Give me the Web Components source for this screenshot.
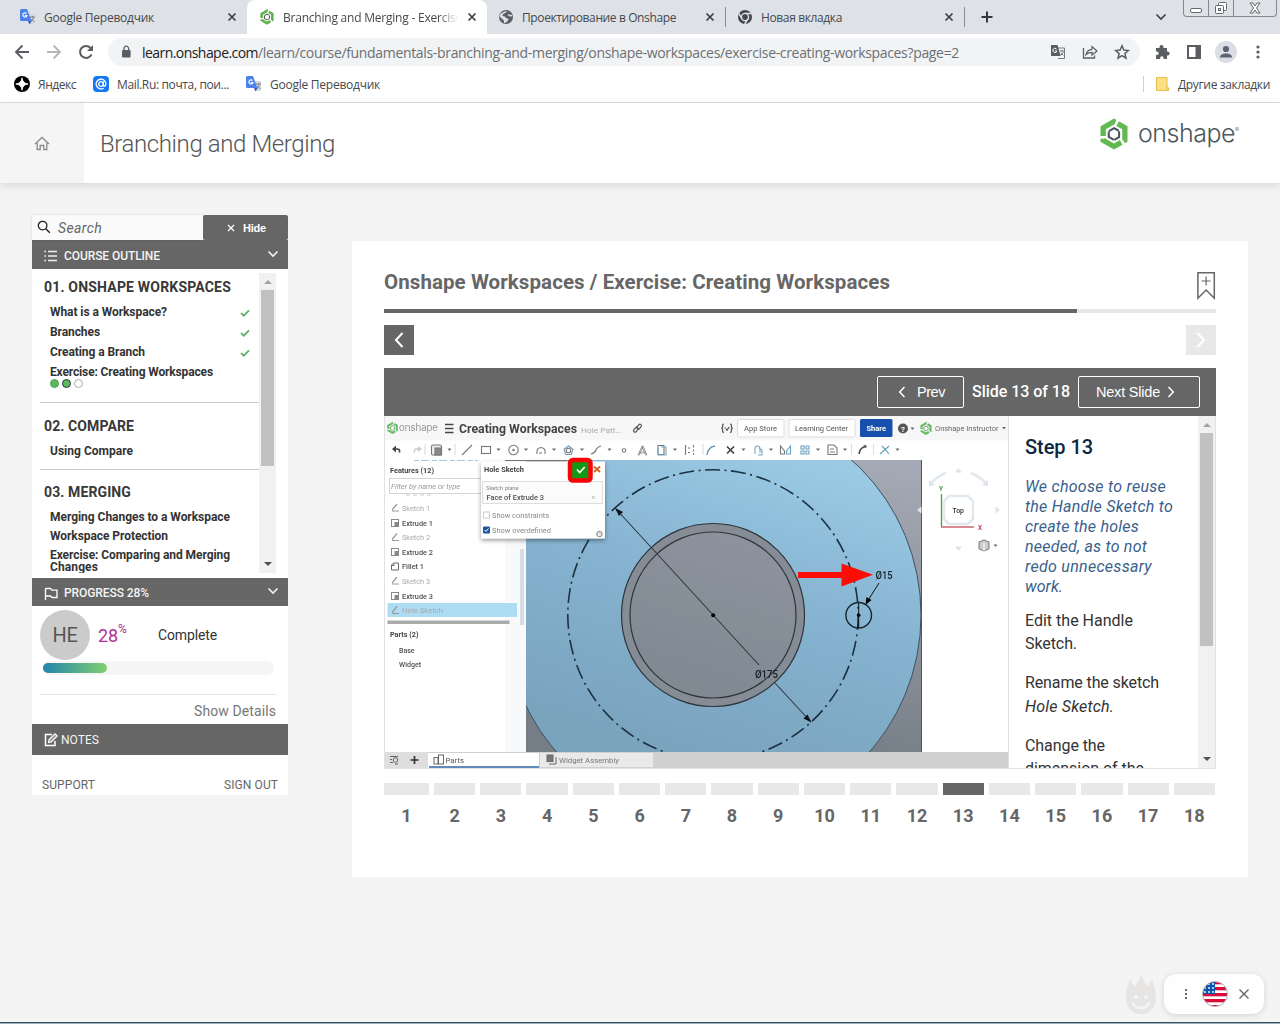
<!DOCTYPE html>
<html lang="ru">
<head>
<meta charset="utf-8">
<title>Branching and Merging - Exercise</title>
<style>
html,body{margin:0;height:100%;overflow:hidden}
body{width:1280px;height:1024px;background:#f4f4f4;font-family:Roboto,sans-serif}
</style>
</head>
<body>
<app-window></app-window>
<script>
const define = (name, html, after) => {
  customElements.define(name, class extends HTMLElement {
    connectedCallback() {
      if (this.shadowRoot) return;
      const root = this.attachShadow({ mode: 'open' });
      root.innerHTML = typeof html === 'function' ? html(this) : html;
      if (after) after(this, root);
    }
  });
};

/* Text that spreads its letters to fill a given width */
const fitted = [];
class FitText extends HTMLElement {
  connectedCallback() {
    if (this.shadowRoot) return;
    this.attachShadow({ mode: 'open' }).innerHTML =
      '<style>:host{display:inline-block;white-space:pre;flex:none}</style><slot></slot>';
    fitted.push(this);
  }
  fit() {
    const w = +this.getAttribute('w');
    const natural = this.getBoundingClientRect().width;
    this.style.letterSpacing = ((w - natural) / this.textContent.length).toFixed(4) + 'px';
  }
}
customElements.define('fit-text', FitText);

const swirl = (g, d) => `<g fill="none" stroke-linejoin="miter">
  ${[0,120,240].map(a => `<path transform="rotate(${a})" d="M-10.6 2V-6.2L0-12.3L1.2-11.6" stroke="${g}" stroke-width="5.2"/>`).join('')}
  ${[0,120,240].map(a => `<path transform="rotate(${a + 60})" d="M-5 2.8V-3L-.4-5.700" stroke="${d}" stroke-width="2"/>`).join('')}</g>`;

const icons = {
  gt: [16,16,'<path d="M7 5h8v10H9z" fill="#d4d7dc"/><path d="M10 8h5M12.5 7v1.5M10.500 13l3.500-4.500M11.500 10l3 3" stroke="#7b818a" fill="none"/><path d="M1.500 0H7l4.500 12H1.500A1.500 1.500 0 0 1 0 10.500v-9A1.500 1.500 0 0 1 1.500 0z" fill="#4c82ee"/><path d="M8 12h3.500L9.500 15.500z" fill="#2f5fc4"/><path d="M6.500 4.500A2.100 2.100 0 1 0 7 6.500H4.800" stroke="#fff" stroke-width="1.100" fill="none"/>'],
  onshape: [16,16,`<g transform="translate(8 8) scale(.5)">${swirl('#5fb24f','#4e5a52')}</g>`],
  brand: [30,34,`<g transform="translate(15 17) scale(1.020)">${swirl('#62b950','#4b565c')}</g>`],
  globe: [16,16,'<circle cx="8" cy="8" r="7" fill="#5c6065"/><path d="M3 4.500q3-2.500 6-2.500-1 2-3 2.500t-1.500 2.500q3 0 3.500 2 2.500 0 2.500 1.500-2 3.500-4.500 3.500 .5-2.500-1-3.500t-3.500-3q0-2 1.500-3z" fill="#dee1e6"/><path d="M10 5.500q1.500 1.500 4 1" stroke="#dee1e6" stroke-width="1.500" fill="none"/>'],
  chrome: [16,16,'<circle cx="8" cy="8" r="7" fill="#44474b"/><circle cx="8" cy="8" r="3.600" fill="none" stroke="#dee1e6" stroke-width="1.400"/><path d="M8 4.500h6.500M5 9.800L1.700 4.300M11 9.800L7.700 15" stroke="#dee1e6" stroke-width="1.400"/>'],
  close: [10,10,'<path d="M1.500 1.500l7 7M8.500 1.500l-7 7" stroke="#3c4043" stroke-width="1.700"/>'],
  plus: [14,14,'<path d="M7 1.500v11M1.500 7h11" stroke="#33373b" stroke-width="2"/>'],
  chev: [12,8,'<path d="M1.500 1.500L6 6l4.500-4.500" stroke="currentColor" stroke-width="1.600" fill="none"/>'],
  back: [16,16,'<path d="M15 8H2.500M8.500 1.500L2 8l6.500 6.500" stroke="#5a5e63" stroke-width="1.900" fill="none"/>'],
  fwd: [16,16,'<path d="M1 8h12.500M7.500 1.500L14 8l-6.500 6.500" stroke="#b5b7ba" stroke-width="1.900" fill="none"/>'],
  reload: [16,16,'<path d="M13.500 10.500A6 6 0 1 1 12.600 4" stroke="#5a5e63" stroke-width="2" fill="none"/><path d="M9 7h6V1z" fill="#5a5e63"/>'],
  lock: [10,14,'<rect x="1" y="5" width="8.600" height="7.500" rx="1" fill="#5a5e63"/><path d="M3 5.500V3.500a2.300 2.300 0 0 1 4.600 0v2" stroke="#5a5e63" stroke-width="1.300" fill="none"/>'],
  translate: [16,16,'<path d="M7 4h7.500v10.500H8" stroke="#777" fill="#f1f3f4"/><path d="M1 1h6.500l3.200 11H1z" fill="#5a5e63"/><path d="M6.500 5A2.100 2.100 0 1 0 7 7H5" stroke="#fff" fill="none"/><path d="M10 7h4M12 6v1.500M10.500 11.500L13.500 8M11 9l2.500 2.500" stroke="#777" fill="none"/>'],
  share: [16,16,'<path d="M1.500 4v10h11v-2.500" stroke="#5a5e63" stroke-width="1.300" fill="none"/><path d="M4 10.500C5 7 7 5.500 10 5.300V2.500l5 4.500-5 4V8.300C7.500 8.300 5.800 9 4 10.500z" stroke="#5a5e63" stroke-width="1.200" fill="none"/>'],
  star: [16,16,'<path d="M8 1.800l1.800 4.300 4.600.4-3.500 3.100 1.100 4.600L8 11.700l-4 2.500 1.100-4.600L1.600 6.500l4.600-.4z" stroke="#5a5e63" stroke-width="1.500" fill="none"/>'],
  puzzle: [16,16,'<path d="M2 4h3.500V3a2 2 0 0 1 4 0v1H13v3.600h.7a1.900 1.900 0 0 1 0 3.800H13V15H9.600v-1a1.700 1.700 0 0 0-3.400 0v1H2v-4h1a1.700 1.700 0 0 0 0-3.400H2z" fill="#5a5e63"/>'],
  panel: [16,16,'<rect x="2" y="2" width="12" height="12" fill="#fff" stroke="#5a5e63" stroke-width="2"/><path d="M9.500 2H14v12H9.500z" fill="#5a5e63"/>'],
  user: [22,22,'<circle cx="11" cy="11" r="11" fill="#dbdee4"/><circle cx="11" cy="8" r="3.100" fill="#5b6475"/><path d="M5 16.500c0-3 3-4 6-4s6 1 6 4z" fill="#5b6475"/>'],
  dots: [6,16,'<g fill="#5a5e63"><circle cx="3" cy="3" r="1.600"/><circle cx="3" cy="8" r="1.600"/><circle cx="3" cy="13" r="1.600"/></g>'],
  yandex: [16,16,'<circle cx="8" cy="8" r="8" fill="#000"/><path d="M8 1.800Q8.600 7.400 14.200 8 8.600 8.600 8 14.200 7.400 8.600 1.800 8 7.400 7.400 8 1.800z" fill="#fff" stroke="#fff" stroke-width=".8"/>'],
  mail: [16,16,'<rect width="16" height="16" rx="4" fill="#1677f2"/><circle cx="8" cy="8" r="2.300" stroke="#fff" stroke-width="1.300" fill="none"/><path d="M10.300 5.500V9c0 2 2.600 1.600 2.600-1A4.900 4.900 0 1 0 10.600 12.200" stroke="#fff" stroke-width="1.300" fill="none"/>'],
  folder: [13,14,'<path d="M.5.500h10.500v9l1.500 1.500v2.500H.5z" fill="#fde084" stroke="#e3bd4d"/><path d="M11 9.500v4" stroke="#e3bd4d"/>'],
  home: [16,15,'<path d="M1 8l7-6.500L15 8M3.200 7v6.500h3V9.500h3.600v4h3V7" stroke="#8b8b8b" stroke-width="1.300" fill="none"/>'],
  search: [14,14,'<circle cx="5.600" cy="5.600" r="4.300" stroke="#222" stroke-width="1.300" fill="none"/><path d="M8.800 8.800l4 4" stroke="#222" stroke-width="1.500"/>'],
  x8: [8,8,'<path d="M1 1l6 6M7 1L1 7" stroke="#fff" stroke-width="1.300"/>'],
  list: [13,12,'<path d="M4 1.500h9M4 6h9M4 10.500h9M.3 1.500H2M.3 6H2M.3 10.500H2" stroke="#eee" stroke-width="1.300"/>'],
  flag: [14,13,'<path d="M1.500 13V1.200M1.500 1.500H6.500L8 3.200H13V10.500H8L6.500 9H1.500" stroke="#fff" stroke-width="1.300" fill="none"/>'],
  note: [14,14,'<path d="M8 1.500H1.500v11h9.500V8" stroke="#fff" stroke-width="1.500" fill="none"/><path d="M4.500 9.500l.6-3L11 .8l2.200 2.200-5.900 5.900z" stroke="#fff" stroke-width="1.200" fill="#999"/>'],
  check: [10,8,'<path d="M1 4l2.700 2.700L9 1.300" stroke="#5bb062" stroke-width="1.700" fill="none"/>'],
  mark: [20,30,'<path d="M1.900 1.700h16.400V27.200L10.100 19 1.900 27.200z" stroke="#666" stroke-width="1.500" fill="none"/><path d="M10.100 5.500v9M5.600 10h9" stroke="#666" stroke-width="1.200"/>'],
  left: [10,16,'<path d="M8.500 1L2 8l6.500 7" stroke="#fff" stroke-width="2" fill="none"/>'],
  right: [10,16,'<path d="M1.500 1L8 8l-6.500 7" stroke="#fff" stroke-width="2" fill="none"/>'],
  sleft: [8,12,'<path d="M6.500 1L1.700 6l4.800 5" stroke="#fff" stroke-width="1.500" fill="none"/>'],
  sright: [8,12,'<path d="M1.500 1L6.300 6l-4.800 5" stroke="#fff" stroke-width="1.500" fill="none"/>'],
  flame: [32,40,'<path d="M16 0c1 5 5 9 6 13 2-2 4-5 5-9 1 6 4 10 4 20 0 10-6 16-15 16S1 34 1 24C1 14 4 10 5 4c1 4 3 7 5 9 1-4 5-8 6-13z" fill="#e7e4e4"/><circle cx="11" cy="23" r="2" fill="#f4f4f4"/><circle cx="21" cy="23" r="2" fill="#f4f4f4"/><path d="M7.500 28c2 8 15 8 17 0" stroke="#f4f4f4" stroke-width="2.500" fill="none"/>'],
  flagus: [26,26,`<defs><clipPath id="c"><circle cx="13" cy="13" r="12"/></clipPath></defs><g clip-path="url(#c)"><rect width="26" height="26" fill="#fff"/>${[1,7,13,19,25].map(y=>`<rect y="${y-1}" width="26" height="3.300" fill="#d80c3a"/>`).join('')}<rect width="13" height="13" fill="#0c55a8"/><g fill="#fff">${[3,7,11].map(y=>[3,7,11].map(x=>`<circle cx="${x}" cy="${y}" r=".9"/>`).join('')).join('')}</g></g><circle cx="13" cy="13" r="12.500" fill="none" stroke="#999" stroke-width=".8"/>`],
  close12: [12,12,'<path d="M1.500 1.500l9 9M10.500 1.500l-9 9" stroke="#666" stroke-width="1.400"/>'],
  sdots: [4,12,'<g fill="#666"><rect x="1" y="1" width="2" height="2"/><rect x="1" y="5" width="2" height="2"/><rect x="1" y="9" width="2" height="2"/></g>']
};
define('ui-icon', el => {
  const [w, h, body] = icons[el.getAttribute('name')];
  return `<style>:host{display:inline-flex;flex:none;width:${w}px;height:${h}px}</style>
  <svg width="${w}" height="${h}" viewBox="0 0 ${w} ${h}">${body}</svg>`;
});

/* ---------- browser chrome ---------- */
define('browser-tab', el => `<style>
:host{display:flex;align-items:center;box-sizing:border-box;width:239px;height:34px;padding:0 10px 0 12px;font-size:12px;color:#45494d;position:relative}
:host([active]){background:#fff;border-radius:8px 8px 0 0;width:240px;padding-right:11px}
:host([sep]){padding:0 11px}
.t{margin-left:8px;flex:1;overflow:hidden;display:flex;height:20px;align-items:center}
:host([active]) .t{-webkit-mask-image:linear-gradient(90deg,#000 88%,transparent 99%);margin-right:7px;flex:0 0 177px}
:host([sep])::after{content:"";width:1px;height:20px;background:#8b8e93;position:absolute;right:0;top:7px}
</style><ui-icon name="${el.getAttribute('icon')}"></ui-icon><span class="t"><slot></slot></span><ui-icon name="close"></ui-icon>`);

define('window-controls', `<style>
:host{display:flex;border:1px solid #85888d;border-top:0;border-radius:0 0 4px 4px;height:16px;width:92px;align-self:flex-start}
span{display:flex;justify-content:center;align-items:center;width:24px;border-right:1px solid #85888d}
span:last-child{flex:1;border:0}</style>
<span><svg width="12" height="16"><rect x=".5" y="8.500" width="11" height="4" rx="1.500" fill="#fff" stroke="#666"/></svg></span>
<span><svg width="14" height="16" fill="#fff" stroke="#666"><rect x="4.500" y="2.500" width="8" height="8" rx="1"/><rect x="1.500" y="5.500" width="8" height="8" rx="1"/><rect x="4.500" y="8.500" width="2" height="2"/></svg></span>
<span><svg width="12" height="16"><path d="M1 3h3l2 3 2-3h3L7.500 8l3.500 5H8l-2-3-2 3H1l3.500-5z" fill="#fff" stroke="#666"/></svg></span>`);

define('browser-tabs', `<style>
:host{display:flex;height:34px;background:#dee1e6;padding-left:8px;align-items:center;font-family:"Open Sans",sans-serif}
.new{margin-left:15px}.chev{margin-left:auto;margin-right:16px;color:#3c4043}
window-controls{margin-right:3px}
</style>
<browser-tab icon="gt"><fit-text w="110">Google Переводчик</fit-text></browser-tab>
<browser-tab icon="onshape" active><fit-text w="179">Branching and Merging - Exercise</fit-text></browser-tab>
<browser-tab icon="globe" sep><fit-text w="154">Проектирование в Onshape</fit-text></browser-tab>
<browser-tab icon="chrome" sep><fit-text w="81">Новая вкладка</fit-text></browser-tab>
<ui-icon class="new" name="plus"></ui-icon><ui-icon class="chev" name="chev"></ui-icon><window-controls></window-controls>`);

define('browser-toolbar', `<style>
:host{display:flex;align-items:center;height:36px;background:#fff;padding:0 19px 0 14px;box-sizing:border-box;font:14px "Open Sans",sans-serif}
.nav{display:flex;gap:16px}
.box{display:flex;align-items:center;margin-left:14px;width:1032px;box-sizing:border-box;height:28px;border-radius:14px;background:#f1f3f4;padding:0 10px 0 13px;color:#202124}
.box fit-text:first-of-type{margin-left:11px}.p{color:#6c7074}
.act{margin-left:auto;display:flex;gap:16px}
.ext{display:flex;align-items:center;margin-left:auto}
.ext>*+*{margin-left:16px}.ext ui-icon:nth-child(3){margin-left:13px}.ext ui-icon:last-child{margin-left:18px}
</style>
<div class="nav"><ui-icon name="back"></ui-icon><ui-icon name="fwd"></ui-icon><ui-icon name="reload"></ui-icon></div>
<div class="box"><ui-icon name="lock"></ui-icon><fit-text w="116">learn.onshape.com</fit-text><fit-text class="p" w="701">/learn/course/fundamentals-branching-and-merging/onshape-workspaces/exercise-creating-workspaces?page=2</fit-text>
<div class="act"><ui-icon name="translate"></ui-icon><ui-icon name="share"></ui-icon><ui-icon name="star"></ui-icon></div></div>
<div class="ext"><ui-icon name="puzzle"></ui-icon><ui-icon name="panel"></ui-icon><ui-icon name="user"></ui-icon><ui-icon name="dots"></ui-icon></div>`);

define('bookmarks-bar', `<style>
:host{display:flex;align-items:center;height:33px;background:#fff;border-bottom:1px solid #d9dadc;box-sizing:border-box;padding:0 10px 4px 14px;font:12px "Open Sans",sans-serif;color:#45494d}
fit-text{margin:0 17px 0 8px}fit-text:last-child{margin:0 0 0 9px}
.sep{margin-left:auto;width:1px;height:16px;background:#cfd1d4;margin-right:12px}</style>
<ui-icon name="yandex"></ui-icon><fit-text w="38">Яндекс</fit-text>
<ui-icon name="mail"></ui-icon><fit-text w="112">Mail.Ru: почта, пои...</fit-text>
<ui-icon name="gt"></ui-icon><fit-text w="110">Google Переводчик</fit-text>
<span class="sep"></span><ui-icon name="folder"></ui-icon><fit-text w="92">Другие закладки</fit-text>`);

/* ---------- page ---------- */
define('course-header', `<style>
:host{display:flex;height:80px;background:#fff;box-shadow:0 3px 9px -1px #0002;position:relative}
.home{width:84px;background:#f5f5f5;display:flex;align-items:center;justify-content:center}
h1{margin:1px 0 0 16px;font:300 24px/80px Roboto,sans-serif;color:#555}
.brand{margin:14px 41px 0 auto;display:flex;height:34px;align-items:center;font:300 25px/34px Inter,sans-serif;color:#4d575c}
.brand fit-text{margin:-3px 0 0 9px}sup{font-size:6px;line-height:8px;align-self:flex-start;margin-top:9px;width:4px}</style>
<div class="home"><ui-icon name="home"></ui-icon></div><h1><fit-text w="235">Branching and Merging</fit-text></h1>
<div class="brand"><ui-icon name="brand"></ui-icon><fit-text w="97">onshape</fit-text><sup>®</sup></div>`);

define('scroll-bar', el => `<style>
:host{display:flex;flex-direction:column;align-items:center;width:17px;flex:none;background:#f1f1f1;box-sizing:border-box}
i{width:0;height:0;border:4px solid transparent}
.u{border-bottom-color:#a3a3a3;border-top:0;margin:7px 0 6px}.d{border-top-color:#505050;border-bottom:0;margin:auto 0 7px}
b{width:13px;height:${el.getAttribute('thumb')}px;background:#c1c1c1}</style><i class="u"></i><b></b><i class="d"></i>`);

define('panel-bar', el => `<style>
:host{display:flex;align-items:center;box-sizing:border-box;background:#666;color:#f4f4f4;padding:2px 9px 0 12px;font:500 12px/16px Roboto,sans-serif}
:host([plain]){padding-top:0}
slot{display:flex;align-items:center}.c{margin-left:auto;margin-bottom:4px}</style>
<slot></slot>${el.hasAttribute('plain') ? '' : '<ui-icon class="c" name="chev"></ui-icon>'}`);

define('outline-item', el => `<style>
:host{display:flex;align-items:center;justify-content:space-between;height:20px;padding:0 9px 0 10px;font:700 12px/12px Roboto,sans-serif;color:#333}
span{display:flex;flex-direction:column;align-items:flex-start}</style><span><slot></slot></span>${el.hasAttribute('done') ? '<ui-icon name="check" style="margin-top:1px"></ui-icon>' : ''}`);

define('outline-section', `<style>
:host{display:block;border-bottom:1px solid #c8c8c8;box-sizing:border-box}
:host(:last-of-type){border:0}
h2{margin:0 0 3px 4px;font:700 14px/24px Roboto,sans-serif;color:#383838}</style><h2><slot name="title"></slot></h2><slot></slot>`);

define('course-outline', `<style>
:host{display:flex;height:309px;background:#fff;padding:4px 12px 5px 8px;box-sizing:border-box}
.l{flex:1;overflow:hidden}
.s1{padding-top:2px;height:130px}.s2{padding-top:11px;height:67px}.s3{padding-top:10px}
.dots{display:flex;gap:3px;padding:0 0 0 10px;margin-top:-3px}.dots i{width:9px;height:9px;border-radius:50%;box-sizing:border-box;border:1px solid #4fa457;background:#5cb85c}
.dots i:nth-child(2){border-color:#234}.dots i:nth-child(3){border-color:#aaa;background:#fff}
.s3 outline-item{height:19px}.s3 outline-item:last-child{height:24px;margin-top:4px}
</style>
<div class="l">
<outline-section class="s1"><fit-text slot="title" w="187">01. ONSHAPE WORKSPACES</fit-text>
<outline-item done><fit-text w="117">What is a Workspace?</fit-text></outline-item><outline-item done><fit-text w="50">Branches</fit-text></outline-item>
<outline-item done><fit-text w="95">Creating a Branch</fit-text></outline-item><outline-item><fit-text w="163">Exercise: Creating Workspaces</fit-text></outline-item>
<div class="dots"><i></i><i></i><i></i></div></outline-section>
<outline-section class="s2"><fit-text slot="title" w="90">02. COMPARE</fit-text><outline-item><fit-text w="83">Using Compare</fit-text></outline-item></outline-section>
<outline-section class="s3"><fit-text slot="title" w="87">03. MERGING</fit-text>
<outline-item><fit-text w="180">Merging Changes to a Workspace</fit-text></outline-item><outline-item><fit-text w="118">Workspace Protection</fit-text></outline-item>
<outline-item><fit-text w="180">Exercise: Comparing and Merging</fit-text><fit-text w="48">Changes</fit-text></outline-item></outline-section>
</div><scroll-bar thumb="176"></scroll-bar>`);

define('search-row', `<style>
:host{display:flex;height:25px}
.f{width:171px;box-sizing:border-box;background:#fafafa;box-shadow:0 0 2px #0002;display:flex;align-items:center;padding:2px 5px 0;font:italic 14px/23px Roboto,sans-serif;color:#666;gap:7px}
.f ui-icon{margin-bottom:3px}
.h{flex:1;background:#666;color:#fff;border-radius:2px;font:700 11px/25px "Liberation Sans",sans-serif;display:flex;align-items:center;gap:8px;padding:1px 0 0 24px;line-height:24px}</style>
<div class="f"><ui-icon name="search"></ui-icon><fit-text w="44">Search</fit-text></div><div class="h"><ui-icon name="x8"></ui-icon><fit-text w="23">Hide</fit-text></div>`);

define('progress-card', `<style>
:host{display:block;height:118px;background:#fff;padding:4px 12px 0 8px;box-sizing:border-box}
.r{display:flex;align-items:center;height:50px}
.a{width:50px;height:50px;border-radius:50%;background:#cbcbcb;color:#555;font:20px/50px Roboto,sans-serif;text-align:center}
.n{font-size:18px;color:#ad3098;margin-left:8px;width:60px;display:flex}.n small{font-size:12px;line-height:8px}
.c{font-size:14px;color:#333}
.bar{margin:1px 2px 0;height:14px;border-radius:7px;background:#f5f5f5;display:flex;align-items:center;padding-left:1px}
.bar i{width:64px;height:10px;border-radius:5px;background:linear-gradient(90deg,#2385ad,#81cf71)}
.s{margin-top:19px;border-top:1px solid #e5e5e5;text-align:right;font-size:14px;line-height:32px;color:#777}</style>
<div class="r"><div class="a"><fit-text w="25">HE</fit-text></div><div class="n"><fit-text w="20">28</fit-text><small>%</small></div><fit-text class="c" w="59">Complete</fit-text></div>
<div class="bar"><i></i></div><div class="s"><fit-text w="82">Show Details</fit-text></div>`);

define('side-panel', `<style>
:host{display:block;width:256px}
.foot{display:flex;justify-content:space-between;background:#fff;height:40px;box-sizing:border-box;padding:20px 10px 0;font:12px/20px Roboto,sans-serif;color:#666}</style>
<search-row></search-row>
<panel-bar style="height:29px"><ui-icon name="list" style="margin-right:7px"></ui-icon><fit-text w="96">COURSE OUTLINE</fit-text></panel-bar>
<course-outline></course-outline>
<panel-bar style="height:28px"><ui-icon name="flag" style="margin-right:6px"></ui-icon><fit-text w="85">PROGRESS 28%</fit-text></panel-bar>
<progress-card></progress-card>
<panel-bar plain style="height:31px;font-weight:400"><ui-icon name="note" style="margin-right:3px"></ui-icon><fit-text w="38">NOTES</fit-text></panel-bar>
<div class="foot"><fit-text w="53">SUPPORT</fit-text><fit-text w="54">SIGN OUT</fit-text></div>`);

/* CAD slide: a drawing in slide coordinates */
const t = (x1, x2, y, s, txt, a = '') => `<text x="${x1}" y="${y}" font-size="${s}" textLength="${x2 - x1}" lengthAdjust="spacingAndGlyphs" ${a}>${txt}</text>`;
const B = 'font-weight="700" fill="#444"', M = 'font-weight="500" fill="#505050"', G = 'fill="#aaa"';
const caret = (x, y) => `<path d="M${x - 2} ${y - 1}h4l-2 2.500z" fill="#668"/>`;
const rows = [['Sketch 1',508,430,0],['Extrude 1',523,433,1],['Sketch 2',537.5,430,0],['Extrude 2',552,433,1],['Fillet 1',566.5,424,2],['Sketch 3',581,430,0],['Extrude 3',596,433,1],['Hole Sketch',610.5,443,0]];
const rowIcon = (k, y) => k === 0 ? `<path d="M392 ${y+3}h7M392 ${y+2}l5-6" stroke="#999" stroke-width="1.200" fill="none"/>` :
  k === 1 ? `<rect x="391.500" y="${y-3.500}" width="7" height="7" fill="#fff" stroke="#888"/><rect x="394.500" y="${y-1}" width="4" height="4.500" fill="#888"/>` :
  `<path d="M391.500 ${y+3.500}v-5l2-2h5v7z" fill="#fff" stroke="#666"/><path d="M394 ${y-3}v2h-2" stroke="#666" fill="none"/>`;
define('cad-slide', `<style>:host{display:block;width:623px;height:352px}svg{display:block;filter:blur(.45px)}</style>
<svg width="623" height="352" viewBox="385 416 623 352" font-family="Roboto,sans-serif">
<defs>
<linearGradient id="blue" x1=".75" y1="0" x2=".45" y2="1"><stop offset=".12" stop-color="#9bcae5"/><stop offset=".45" stop-color="#86b4d1"/><stop offset=".85" stop-color="#7aa3be"/></linearGradient>
<linearGradient id="grey" x1=".8" y1="0" x2=".6" y2="1"><stop offset="0" stop-color="#a5a9b5"/><stop offset="1" stop-color="#757d86"/></linearGradient>
<linearGradient id="hub" x1=".7" y1="0" x2=".4" y2="1"><stop offset="0" stop-color="#8d939e"/><stop offset="1" stop-color="#7f8992"/></linearGradient>
<clipPath id="cv"><rect x="526" y="460" width="396" height="292"/></clipPath>
<filter id="sh" x="-10%" y="-10%" width="120%" height="125%"><feDropShadow dx="0" dy="2" stdDeviation="2" flood-opacity=".4"/></filter>
</defs>
<rect x="385" y="416" width="623" height="353" fill="#fff"/>
<g clip-path="url(#cv)">
<rect x="526" y="460" width="396" height="292" fill="url(#grey)"/>
<circle cx="713" cy="615" r="208" fill="url(#blue)" stroke="#3f5060"/>
<circle cx="713" cy="615" r="91.500" fill="#858c95" stroke="#2e353b" stroke-width="1.200"/>
<circle cx="713" cy="615" r="83" fill="url(#hub)" stroke="#2e353b" stroke-width="1.200"/>
<circle cx="713" cy="615" r="145.200" fill="none" stroke="#1c3040" stroke-width="1.600" stroke-dasharray="15 4.500 2 4.500"/>
<path d="M616 509L759 665M775 683L811 722" stroke="#30363b" stroke-width="1.100"/>
<path d="M615 508l8 4-4 4zM811.500 722.500l-8-4 4-4z" fill="#111"/><circle cx="713.200" cy="615.300" r="2"/>
<circle cx="858.700" cy="615.300" r="12.800" fill="none" stroke="#14242f" stroke-width="1.400"/><circle cx="858.700" cy="615.300" r="1.800"/><path d="M858.700 603v25M879 583l-12 19" stroke="#111"/><path d="M865.500 605l1-8 5 3z"/>
<path d="M921.500 460v292" stroke="#50565c"/>
</g>
${t(755,778,678,10.500,'Ø175','fill="#15202a" font-weight="500"')}${t(875.5,892.5,579,10.500,'Ø15','fill="#15202a" font-weight="500"')}
<path d="M798 572h43.500v-8.500L873 574.800l-31.500 11.700v-8.500H798z" fill="#fd0d05"/>
<!-- header -->
<rect x="385" y="416" width="623" height="24.500" fill="#f7f7f7"/>
<g transform="translate(392.500 428) scale(.4)">${swirl('#68b96a','#5c9c62')}</g>${t(399,438,430.5,10,'onshape','fill="#777" font-family="Inter" font-weight="300"')}
<path d="M445 424.500h8.500M445 428.500h8.500M445 432.500h8.500" stroke="#444" stroke-width="1.700"/>
${t(459,577,432.5,12.500,'Creating Workspaces','font-weight="700" fill="#444"')}${t(581,622,432.5,8,'Hole Patt...','fill="#aaa"')}
<g fill="none" stroke="#555" stroke-width="1.200"><rect x="-3" y="-1.500" width="5.500" height="3" rx="1.500" transform="translate(636 429.500) rotate(-50)"/><rect x="-3" y="-1.500" width="5.500" height="3" rx="1.500" transform="translate(639.300 426.500) rotate(-50)"/>
<path d="M724 424q-2 0-1.300 3l-1 1.200 1 1.200q-.7 3 1.300 3M730 424q2 0 1.300 3l1 1.200-1 1.200q.7 3-1.300 3M724.500 428h1.500M726 429l1 1.200 2.200-3"/></g>
<g fill="#fff" stroke="#ddd"><rect x="737.500" y="419.500" width="46.500" height="17.500" rx="1.500"/><rect x="789" y="419.500" width="66" height="17.500" rx="1.500"/></g>
${t(744,777,431,7.500,'App Store','fill="#555"')}${t(795,848,431,7.500,'Learning Center','fill="#555"')}
<rect x="860" y="419" width="32.500" height="18" rx="1.500" fill="#1750ac"/>${t(866.5,886,431,7.500,'Share','fill="#fff" font-weight="700"')}
<circle cx="903" cy="428.500" r="5" fill="#555"/><text x="901" y="431.500" font-size="8" fill="#fff" font-weight="700">?</text>${caret(912.5,428.5)}
<g transform="translate(926 428.500) scale(.42)">${swirl('#68b96a','#5c9c62')}</g>${t(935,998.5,431,7.500,'Onshape Instructor','fill="#666"')}${caret(1004,428)}
<!-- toolbar -->
<g fill="none" stroke="#777" stroke-width="1.100">
<path d="M395 449h2.500q2.500 0 2 3.500" stroke="#444" stroke-width="1.700"/><path d="M396 445.500l-4 3.500 4 3.500z" fill="#444" stroke="none"/><path d="M419 449h-2.500q-2.500 0-2 3.500" stroke="#ccc" stroke-width="1.500"/><path d="M418 446l4 3-4 3z" fill="#ccc" stroke="none"/>
<path d="M425 444v11M455 444v11M703 444v11M851.500 444v11M873.500 444v11" stroke="#ddd"/>
<rect x="431.500" y="445" width="10" height="10" rx="1.500" fill="#eee"/><rect x="435" y="448" width="6.500" height="7" fill="#888"/>
<path d="M462 455l10-10"/><rect x="481.500" y="446.500" width="9" height="7"/>
<circle cx="513.500" cy="450" r="4.700"/><circle cx="513.500" cy="450" r=".7"/><path d="M537 454q-1-6 4-6.500 5 .5 4 6.500M539 453h3"/>
<path d="M568.500 446l4.500 3.300-1.700 5.200h-5.600l-1.700-5.200z" stroke="#7396b4"/><circle cx="568.500" cy="450.500" r="2.300"/><path d="M591 454q4-1 5-4t5-4"/><circle cx="624" cy="450.500" r="1.800"/>
<rect x="658" y="445.500" width="6" height="9"/><path d="M658 448v7h8v-8h-5" stroke="#7aaac8"/>
<path d="M685.500 445v10M688 448h2M688 452.500h2M693.500 445v2.500M693.500 449.500v2M693.500 453v2"/><path d="M707 455q1-8 8-9" stroke="#69b" stroke-width="1.500"/>
<path d="M727 446.500l7 7M734 446.500l-7 7" stroke="#444" stroke-width="1.700"/><path d="M755 454v-5q0-3 2.500-3t2.500 3v4M759 448l3 2v5h-4" stroke="#7aa6c4"/>
<path d="M780.500 446v8h4v-3z"/><path d="M790.500 446v8h-4v-3z" stroke="#6aa0c4"/><path d="M801 446h3v3h-3zM806 446h3v3h-3zM801 451h3v3h-3zM806 451h3v3h-3z" stroke="#6aa0c4"/>
<path d="M828 445h6l3 3v6.500h-9zM830 449h4M830 452h5"/><path d="M859 454q1-6 5-7" stroke="#444" stroke-width="1.500"/><circle cx="865" cy="446.500" r="1.200" fill="#444"/><path d="M880 454l9-8M882 446q3 3 7 8" stroke="#6a9cbf"/>
</g>${t(638,647,454.5,12,'A','fill="none" stroke="#888" stroke-width=".7"')}
${[449.5,498.5,526,554,582,609.5,675,743.5,771,818,845,897.5].map(x => caret(x, 449.5)).join('')}
<!-- features -->
<rect x="505" y="460" width="21" height="292" fill="#f8f9fa"/>
<path d="M414 460.500h64" stroke="#9cc8e0" stroke-dasharray="5 2 8 3"/><path d="M505 460.500h62" stroke="#777"/>
${t(390,434,472.5,7.500,'Features (12)',B)}
<rect x="389.500" y="478.500" width="94" height="15" fill="#fff" stroke="#d5d5d5"/>${t(391,460,488.5,7.500,'Filter by name or type','fill="#999" font-style="italic"')}
<path d="M406 495h27" stroke="#ccc" stroke-dasharray="4 3"/>
<rect x="387.500" y="603" width="129.500" height="14" fill="#addcf5"/>
${rows.map(([n,y,x2,k]) => rowIcon(k, y) + t(402, x2, y + 2.7, 7.800, n, k ? M : G)).join('')}
<rect x="387.500" y="620.500" width="122" height="3.500" fill="#aaa"/><rect x="520" y="549" width="4" height="76" fill="#d7dde7"/>
${t(390,418.5,637,7.500,'Parts (2)',B)}${t(399,414.5,652.7,7.500,'Base',M)}${t(399,421,667,7.500,'Widget',M)}
<!-- dialog -->
<rect x="481" y="461.500" width="124" height="77" fill="#fff" filter="url(#sh)"/>
${t(484,524,472,7.500,'Hole Sketch',B)}<rect x="482.500" y="481.500" width="120" height="22" fill="#fbfbfb" stroke="#ddd"/>
${t(486,518.5,490,5.500,'Sketch plane','fill="#888"')}${t(486.5,544,499.5,7.500,'Face of Extrude 3',M)}<path d="M592 496l3 3M595 496l-3 3" stroke="#bbb"/>
<rect x="483.500" y="512" width="6" height="6" fill="#fff" stroke="#ccc"/>${t(492,549,518,7.500,'Show constraints','fill="#888"')}
<rect x="483" y="526.500" width="7" height="7" rx="1" fill="#1b57a2"/><path d="M484.500 530l1.500 1.500 2.500-3" stroke="#fff" fill="none"/>${t(492,551,533,7.500,'Show overdefined','fill="#888"')}
<circle cx="599.500" cy="534" r="2.700" fill="none" stroke="#777"/><path d="M598.700 533.300q.8-1 1.500 0t-.7 1.400" stroke="#777" stroke-width=".6" fill="none"/>
<rect x="570" y="460" width="20.500" height="20.500" rx="3" fill="#129918" stroke="#fb0207" stroke-width="4.500"/><path d="M577 469.500l2.700 3 5-5.500" stroke="#fff" stroke-width="1.700" fill="none"/>
<path d="M594 466.500l6 5.500M600 466.500l-6 5.500" stroke="#d7632c" stroke-width="2"/>
<!-- view cube -->
<g fill="none" stroke="#e1e9ef" stroke-width="2.500"><path d="M931 483q7-7 15-10M971 473q8 3 15 10"/><path d="M949 496h19l5 5v18l-5 5h-19l-5-5v-18z"/></g>
<g fill="#dce5ec"><path d="M958.500 468l3.500 4.500h-7zM958.500 551l3.500-4.500h-7zM1000 510l-4.500-3.500v7zM917 510l4.500-3.500v7zM929 480v6l6-1zM988 480v6l-6-1z"/></g>
<path d="M941.500 494v33" stroke="#44a04b" stroke-width="1.300"/><path d="M941 527h33" stroke="#cd6470" stroke-width="1.300"/>
${t(952.5,964,512.5,7.500,'Top','fill="#333" font-weight="500"')}${t(939,943,490.5,7,'Y','fill="#3b9c3f" font-weight="700"')}${t(978,982,530,7,'X','fill="#d34451" font-weight="700"')}
<path d="M979 542l5-2 5 2v7l-5 2-5-2z" fill="#ccc" stroke="#777"/><path d="M984 543v8" stroke="#fff"/>${caret(995.5,545.5)}
<!-- sheet tabs -->
<rect x="385" y="752" width="623" height="17" fill="#d0d0d0"/><rect x="385" y="752" width="43" height="17" fill="#dedede"/>
<rect x="428" y="753" width="111" height="16" fill="#fff"/><path d="M429 767h110" stroke="#2e63a5" stroke-width="1.500"/><rect x="540" y="753" width="113" height="14" fill="#e9e9e9"/>
<g fill="none" stroke="#666"><path d="M390 756.500h8M390 759.500h2M390 762.500h3M395 764h3"/><circle cx="395.500" cy="760" r="2.300"/><path d="M414.500 756v8M410.500 760h8" stroke="#333" stroke-width="1.700"/><rect x="434" y="757.500" width="4" height="6.500"/><rect x="438.500" y="755" width="5" height="9"/><rect x="547" y="755" width="6" height="6.500" fill="#777"/><path d="M549 764h7v-7"/></g>
${t(445.5,464,763,8,'Parts','fill="#555"')}${t(559,619,763,8,'Widget Assembly','fill="#777"')}
</svg>`);

define('slide-notes', `<style>
:host{display:flex;flex:1;border-left:1px solid #e1e1e1;overflow:hidden;height:352px}
.b{flex:1;padding:18px 0 0 16px;overflow:hidden;box-sizing:border-box;font:16px/23px Roboto,sans-serif;color:#333}
h3{margin:0 0 17px;font:500 20px/26px Roboto,sans-serif;color:#0b2840}
.i{display:flex;flex-direction:column;align-items:flex-start;line-height:20px;font-style:italic;color:#3a5f8c}
p{margin:0 0 16px;display:flex;flex-direction:column;align-items:flex-start}.i+p{margin-top:12px}p em{line-height:25px}p:last-child{margin-top:-1px}</style>
<div class="b"><h3><fit-text w="68">Step 13</fit-text></h3>
<div class="i"><fit-text w="141">We choose to reuse</fit-text><fit-text w="148">the Handle Sketch to</fit-text><fit-text w="114">create the holes</fit-text><fit-text w="122">needed, as to not</fit-text><fit-text w="127">redo unnecessary</fit-text><fit-text w="38">work.</fit-text></div>
<p><fit-text w="108">Edit the Handle</fit-text><fit-text w="52">Sketch.</fit-text></p>
<p><fit-text w="134">Rename the sketch</fit-text><em><fit-text w="89">Hole Sketch.</fit-text></em></p>
<p><fit-text w="80">Change the</fit-text><fit-text w="119">dimension of the</fit-text></p></div>
<scroll-bar thumb="213"></scroll-bar>`);

define('slide-bar', `<style>
:host{display:flex;align-items:center;justify-content:flex-end;gap:8px;height:48px;background:#666;padding-right:16px;color:#fff;font:500 16px Roboto,sans-serif}
:host>fit-text,.n{margin-bottom:2px}
button{all:unset;box-sizing:border-box;display:flex;align-items:center;height:32px;border:1px solid #fff;border-radius:2px;padding:0 18px 0 20px;gap:11px;font:14.500px "Liberation Sans",sans-serif}
button:last-child{width:122px;padding:0 0 0 17px;gap:7px}</style>
<button><ui-icon name="sleft"></ui-icon><fit-text w="28">Prev</fit-text></button><fit-text class="n" w="98">Slide 13 of 18</fit-text><button><fit-text w="64">Next Slide</fit-text><ui-icon name="sright"></ui-icon></button>`);

define('slide-pager', el => `<style>
:host{display:flex;gap:5px;margin-top:14px;padding-right:1px;font:700 18px/24px Roboto,sans-serif;color:#666}
div{flex:1;text-align:center}div:first-of-type{flex:0 0 45px}
div::before{content:"";display:block;height:12px;background:#e8e8e8;margin-bottom:9px}
.on::before{background:#666}</style>` + Array.from({length:18}, (_, i) => `<div class="${i === 12 ? 'on' : ''}">${i + 1}</div>`).join(''));

define('lesson-card', `<style>
:host{display:block;width:896px;height:636px;box-sizing:border-box;background:#fff;padding:27px 32px 0}
.top{display:flex;justify-content:space-between;height:41px}
h2{margin:0;font:700 20.500px/29px Roboto,sans-serif;color:#666}.top ui-icon{margin:3px 0 0 0}
.line{height:4px;background:linear-gradient(90deg,#666 693px,#e8e8e8 693px)}
.nav{display:flex;justify-content:space-between;padding:12px 0 13px}
.nav span{width:30px;height:30px;background:#666;display:flex;align-items:center;justify-content:center}.nav span+span{background:#e8e8e8}
.body{display:flex;border:1px solid #e1e1e1;border-top:0;height:352px}</style>
<div class="top"><h2><fit-text w="506">Onshape Workspaces / Exercise: Creating Workspaces</fit-text></h2><ui-icon name="mark"></ui-icon></div>
<div class="line"></div><div class="nav"><span><ui-icon name="left"></ui-icon></span><span><ui-icon name="right"></ui-icon></span></div>
<slide-bar></slide-bar><div class="body"><cad-slide></cad-slide><slide-notes></slide-notes></div><slide-pager></slide-pager>`);

define('translate-widget', `<style>
:host{display:flex;align-items:center;position:absolute;right:16px;bottom:10px;gap:7px}
.p{display:flex;align-items:center;justify-content:space-between;width:100px;height:40px;box-sizing:border-box;padding:0 14px 0 20px;border-radius:12px;background:#fffefe;box-shadow:0 1px 6px #0002}
.p ui-icon:nth-child(2){margin-left:4px}</style>
<ui-icon name="flame"></ui-icon><div class="p"><ui-icon name="sdots"></ui-icon><ui-icon name="flagus"></ui-icon><ui-icon name="close12"></ui-icon></div>`);

define('app-window', `<style>
:host{display:flex;flex-direction:column;height:1024px;position:relative;overflow:hidden}
main{display:flex;gap:64px;padding:32px 32px 0;flex:1;align-items:flex-start}lesson-card{margin-top:26px}
footer{height:2px;background:linear-gradient(#34505f 50%,#9fb0ba 50%)}</style>
<browser-tabs></browser-tabs><browser-toolbar></browser-toolbar><bookmarks-bar></bookmarks-bar>
<course-header></course-header>
<main><side-panel></side-panel><lesson-card></lesson-card></main><footer></footer>
<translate-widget></translate-widget>`);

fitted.forEach(f => f.fit());
</script>
</body>
</html>
